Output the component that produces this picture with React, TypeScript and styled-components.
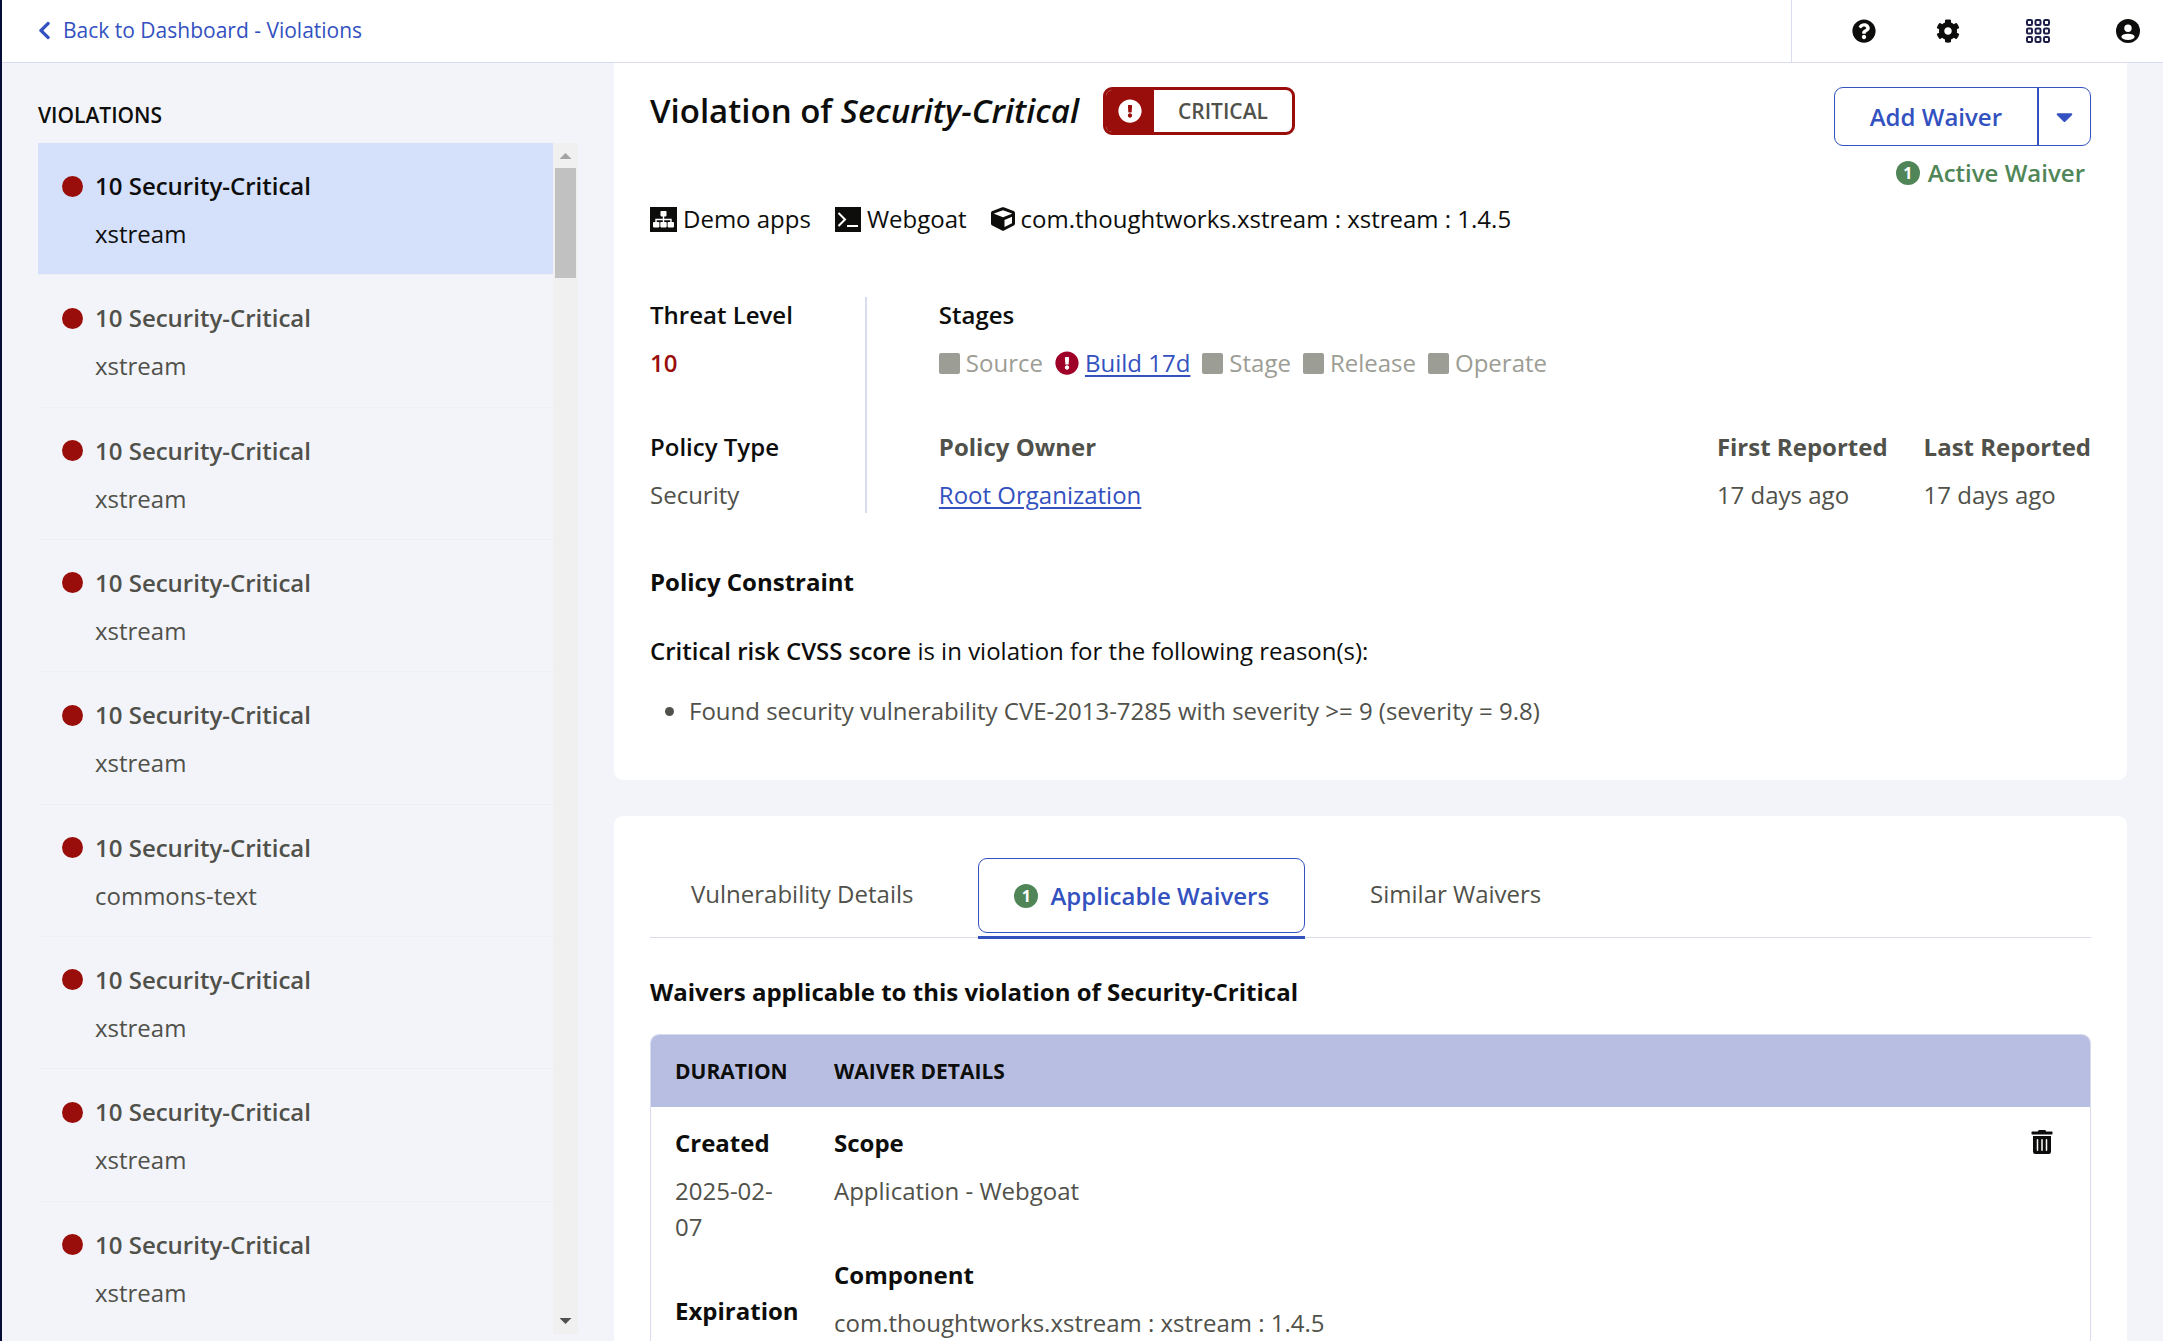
import React from 'react';
import styled, { createGlobalStyle } from 'styled-components';
import {
  FaCaretDown,
  FaChevronLeft,
  FaCog,
  FaCube,
  FaExclamationCircle,
  FaQuestionCircle,
  FaTrashAlt,
} from 'react-icons/fa';

const color = {
  ink: '#0d0e0c',
  text: '#50514a',
  muted: '#9c9d94',
  link: '#3351bf',
  red: '#990e0a',
  crimson: '#9f0028',
  green: '#508657',
  page: '#f3f4fa',
  border: '#d9dbee',
  selected: '#d5e0fb',
  tableHead: '#b8bee2',
};

const GlobalStyle = createGlobalStyle`
  *, *::before, *::after { box-sizing: border-box; }
  body {
    margin: 0;
    background: ${color.page};
    color: ${color.ink};
    font-family: "Open Sans", "Noto Sans", sans-serif;
    font-size: 24px;
    line-height: 36px;
  }
  h1, h2, h3, p, ul, dl, dd, dt { margin: 0; padding: 0; }
  button { font: inherit; color: inherit; background: none; border: 0; padding: 0; cursor: pointer; }
  svg { display: block; flex: none; }
`;

const Shell = styled.div`
  display: flex;
  flex-direction: column;
  height: 100vh;
  overflow: hidden;
  border-left: 2px solid #030d38;
`;

const Header = styled.header`
  display: flex;
  flex: none;
  justify-content: space-between;
  height: 63px;
  background: #fff;
  border-bottom: 1px solid ${color.border};
`;

const BackLink = styled.a`
  display: flex;
  align-items: center;
  gap: 12px;
  padding: 0 36px 2px;
  color: ${color.link};
  font-size: 21px;
  text-decoration: none;
`;

const BackIcon = styled(FaChevronLeft)`
  width: 13px;
  height: 21px;
`;

const Tools = styled.nav`
  display: flex;
  align-items: center;
  gap: 66px;
  padding: 0 23px 0 60px;
  border-left: 1px solid ${color.border};
`;

const ToolPair = styled.div`
  display: flex;
  gap: 60px;
`;

const IconButton = styled.button`
  display: grid;
  place-items: center;
  width: 24px;
  height: 24px;
`;

const Body = styled.div`
  display: flex;
  flex: 1;
  min-height: 0;
`;

const Sidebar = styled.aside`
  display: flex;
  flex: none;
  flex-direction: column;
  width: 612px;
  padding: 34px 36px 7px;
`;

const SidebarTitle = styled.h2`
  margin-bottom: 10px;
  font-size: 21px;
  font-weight: 600;
  text-transform: uppercase;
`;

const ListFrame = styled.div`
  display: flex;
  flex: 1;
  min-height: 0;
`;

const List = styled.ul`
  display: grid;
  flex: 1;
  grid-auto-rows: 1fr;
  list-style: none;
`;

const ListItem = styled.li`
  border-bottom: 1px solid #edeff5;

  &:last-child {
    border-bottom: 0;
  }
`;

const ViolationButton = styled.button<{ $selected: boolean }>`
  display: grid;
  grid-template-columns: 21px 1fr;
  align-content: start;
  align-items: center;
  gap: 12px;
  width: 100%;
  height: 100%;
  padding: 25px 24px 0;
  text-align: left;
  color: ${(p) => (p.$selected ? color.ink : color.text)};
  background: ${(p) => (p.$selected ? color.selected : 'transparent')};
`;

const Dot = styled.span`
  width: 21px;
  height: 21px;
  border-radius: 50%;
  background: ${color.red};
`;

const ViolationName = styled.span`
  font-weight: 600;
`;

const ViolationComponent = styled.span`
  grid-column: 2;
`;

const ScrollTrack = styled.div`
  display: flex;
  flex-direction: column;
  align-items: center;
  width: 25px;
  background: #f0f0f0;
`;

const ScrollArrow = styled.span<{ $down?: boolean }>`
  width: 12px;
  height: 6px;
  margin: ${(p) => (p.$down ? 'auto 0 10px' : '10px 0 9px')};
  background: ${(p) => (p.$down ? '#505050' : '#a3a3a3')};
  clip-path: ${(p) => (p.$down ? 'polygon(0 0, 100% 0, 50% 100%)' : 'polygon(0 100%, 100% 100%, 50% 0)')};
`;

const ScrollThumb = styled.span`
  width: 21px;
  height: 110px;
  background: #c1c1c1;
`;

const Main = styled.main`
  display: flex;
  flex: 1;
  flex-direction: column;
  gap: 36px;
  min-width: 0;
  padding-right: 36px;
  overflow: hidden;
`;

const Panel = styled.section<{ $first?: boolean }>`
  flex: none;
  padding: ${(p) => (p.$first ? '24px 36px 51px' : '42px 36px 36px')};
  background: #fff;
  border-radius: ${(p) => (p.$first ? '0 0 9px 9px' : '9px')};
`;

const TitleRow = styled.div`
  display: flex;
  align-items: flex-start;
  justify-content: space-between;
`;

const TitleGroup = styled.div`
  display: flex;
  align-items: center;
  gap: 24px;
`;

const Title = styled.h1`
  font-size: 33px;
  font-weight: 600;
  line-height: 48px;
`;

const SeverityBadge = styled.span`
  display: flex;
  height: 48px;
  overflow: hidden;
  border: 3px solid ${color.red};
  border-radius: 9px;
  color: ${color.text};
  font-size: 21px;
  font-weight: 600;
  line-height: 42px;
`;

const SeverityIcon = styled.span`
  display: grid;
  place-items: center;
  width: 48px;
  color: #fff;
  background: ${color.red};
`;

const SeverityText = styled.span`
  padding: 0 24px;
`;

const Actions = styled.div`
  display: flex;
  flex-direction: column;
  align-items: flex-end;
  gap: 9px;
`;

const SplitButton = styled.div`
  display: flex;
  height: 59px;
  border: 1px solid ${color.link};
  border-radius: 9px;
  color: ${color.link};
`;

const AddButton = styled.button`
  padding: 0 35px;
  font-weight: 600;
`;

const CaretButton = styled.button`
  display: grid;
  place-items: center;
  width: 53px;
  border-left: 2px solid ${color.link};
`;

const ActiveWaiver = styled.div`
  display: flex;
  align-items: center;
  gap: 8px;
  padding-right: 6px;
  color: ${color.green};
  font-weight: 600;
`;

const Count = styled.span`
  display: grid;
  place-items: center;
  width: 24px;
  height: 24px;
  border-radius: 50%;
  color: #fff;
  background: ${color.green};
  font-size: 16px;
  font-weight: 700;
  line-height: 24px;
`;

const Crumbs = styled.ul`
  display: flex;
  gap: 24px;
  margin-top: 10px;
  list-style: none;
`;

const Crumb = styled.li`
  display: flex;
  align-items: center;
  gap: 6px;
`;

const Facts = styled.div`
  display: flex;
  margin-top: 60px;
`;

const FactColumn = styled.dl<{ $divided?: boolean; $push?: boolean }>`
  display: flex;
  flex-direction: column;
  justify-content: flex-end;
  gap: 48px;
  min-height: 216px;
  margin-left: ${(p) => (p.$push ? 'auto' : '0')};
  padding: ${(p) => (p.$divided ? '0 72px 0 0' : '0')};
  border-right: ${(p) => (p.$divided ? `2px solid ${color.border}` : '0')};
`;

const StageColumn = styled(FactColumn)`
  margin-left: 72px;
`;

const DateColumn = styled(FactColumn)`
  & + & {
    margin-left: 36px;
  }
`;

const Fact = styled.div`
  display: flex;
  flex-direction: column;
  gap: 12px;
`;

const Term = styled.dt<{ $tone?: 'ink' | 'text'; $weight?: number }>`
  color: ${(p) => (p.$tone === 'text' ? color.text : color.ink)};
  font-weight: ${(p) => p.$weight ?? 600};
`;

const Value = styled.dd<{ $danger?: boolean }>`
  color: ${(p) => (p.$danger ? color.red : color.text)};
  font-weight: ${(p) => (p.$danger ? 600 : 400)};
`;

const Stages = styled.dd`
  display: flex;
  gap: 12px;
`;

const Stage = styled.span`
  display: flex;
  align-items: center;
  gap: 6px;
  color: ${color.muted};
`;

const StageBox = styled.span`
  width: 21px;
  height: 21px;
  border-radius: 2px;
  background: ${color.muted};
`;

const Link = styled.a`
  color: ${color.link};
  text-decoration: underline;
  text-decoration-thickness: 2px;
  text-underline-offset: 3px;
`;

const SectionTitle = styled.h2`
  margin-top: 51px;
  font-size: 24px;
  font-weight: 700;
`;

const Reason = styled.p`
  margin-top: 33px;
`;

const Strong = styled.strong`
  font-weight: 600;
`;

const Reasons = styled.ul`
  margin-top: 24px;
  padding-left: 39px;
  color: ${color.text};
`;

const TabBar = styled.div`
  display: flex;
  gap: 24px;
  border-bottom: 1px solid ${color.border};
`;

const Tab = styled.button<{ $active: boolean }>`
  height: 81px;
  margin-bottom: -2px;
  padding-bottom: 3px;
  border-bottom: 3px solid ${(p) => (p.$active ? color.link : 'transparent')};
`;

const TabFace = styled.span<{ $active: boolean }>`
  display: flex;
  align-items: center;
  gap: 12px;
  height: 75px;
  padding: ${(p) => (p.$active ? '0 35px' : '0 41px 3px')};
  border: ${(p) => (p.$active ? `1px solid ${color.link}` : '0')};
  border-radius: 9px;
  color: ${(p) => (p.$active ? color.link : color.text)};
  font-weight: ${(p) => (p.$active ? 600 : 400)};
`;

const WaiverTitle = styled(SectionTitle)`
  margin-top: 36px;
  margin-bottom: 24px;
`;

const TableFrame = styled.div`
  overflow: hidden;
  border: 1px solid ${color.border};
  border-radius: 9px;
`;

const Table = styled.table`
  width: 100%;
  border-collapse: collapse;
  table-layout: fixed;
`;

const HeadCell = styled.th<{ $width?: string }>`
  width: ${(p) => p.$width ?? 'auto'};
  height: 72px;
  padding: 0 24px;
  background: ${color.tableHead};
  font-size: 21px;
  font-weight: 700;
  text-align: left;
  text-transform: uppercase;
`;

const Cell = styled.td<{ $tight?: boolean }>`
  padding: ${(p) => (p.$tight ? '18px 12px 36px 24px' : '18px 24px 36px')};
  vertical-align: top;
`;

const DetailRow = styled.div`
  display: flex;
  align-items: flex-start;
  justify-content: space-between;
`;

const DetailList = styled.dl`
  display: flex;
  flex-direction: column;
  gap: 48px;
`;

const RemoveButton = styled(IconButton)`
  margin: 5px 12px 0 0;
`;

function AppsIcon() {
  return (
    <svg width="24" height="24" viewBox="0 0 24 24" fill="none" stroke="#1d1f4b" strokeWidth="2" aria-hidden="true">
      {[1, 9.5, 18].map((y) =>
        [1, 9.5, 18].map((x) => <rect key={`${x}-${y}`} x={x} y={y} width="5" height="5" rx="1.2" />),
      )}
    </svg>
  );
}

function UserIcon() {
  return (
    <svg width="24" height="24" viewBox="0 0 24 24" aria-hidden="true">
      <circle cx="12" cy="12" r="12" fill={color.ink} />
      <circle cx="12" cy="9.2" r="3.7" fill="#fff" />
      <ellipse cx="12" cy="17.8" rx="6.6" ry="3.1" fill="#fff" />
    </svg>
  );
}

function OrganizationIcon() {
  return (
    <svg width="27" height="25" viewBox="0 0 27 25" aria-hidden="true">
      <rect width="27" height="25" fill={color.ink} />
      <g fill="#fff">
        <rect x="10.5" y="4" width="6" height="5.4" rx="0.8" />
        <rect x="3" y="15" width="6.4" height="5.4" rx="0.8" />
        <rect x="10.3" y="15" width="6.4" height="5.4" rx="0.8" />
        <rect x="17.6" y="15" width="6.4" height="5.4" rx="0.8" />
      </g>
      <path d="M13.5 8.5V16M6 16v-3.5h15V16" fill="none" stroke="#fff" strokeWidth="1.4" />
    </svg>
  );
}

function TerminalIcon() {
  return (
    <svg width="26" height="25" viewBox="0 0 26 25" aria-hidden="true">
      <rect width="26" height="25" fill={color.ink} />
      <path d="M3.5 6l6.5 6.5L3.5 19M12 19h11" fill="none" stroke="#fff" strokeWidth="2" />
    </svg>
  );
}

const violations = [
  'xstream', 'xstream', 'xstream', 'xstream', 'xstream', 'commons-text', 'xstream', 'xstream', 'xstream',
];

const tabs = [
  { label: 'Vulnerability Details' },
  { label: 'Applicable Waivers', count: 1 },
  { label: 'Similar Waivers' },
];

export default function App() {
  const [selected, setSelected] = React.useState(0);
  const [activeTab, setActiveTab] = React.useState(1);

  return (
    <>
      <GlobalStyle />
      <Shell>
        <Header>
          <BackLink href="#dashboard">
            <BackIcon />
            Back to Dashboard - Violations
          </BackLink>
          <Tools>
            <ToolPair>
              <IconButton type="button" aria-label="Help"><FaQuestionCircle size={24} /></IconButton>
              <IconButton type="button" aria-label="Settings"><FaCog size={24} /></IconButton>
            </ToolPair>
            <IconButton type="button" aria-label="Apps"><AppsIcon /></IconButton>
            <IconButton type="button" aria-label="Account"><UserIcon /></IconButton>
          </Tools>
        </Header>

        <Body>
          <Sidebar>
            <SidebarTitle>Violations</SidebarTitle>
            <ListFrame>
              <List>
                {violations.map((component, i) => (
                  <ListItem key={i}>
                    <ViolationButton type="button" $selected={i === selected} onClick={() => setSelected(i)}>
                      <Dot />
                      <ViolationName>10 Security-Critical</ViolationName>
                      <ViolationComponent>{component}</ViolationComponent>
                    </ViolationButton>
                  </ListItem>
                ))}
              </List>
              <ScrollTrack aria-hidden="true">
                <ScrollArrow />
                <ScrollThumb />
                <ScrollArrow $down />
              </ScrollTrack>
            </ListFrame>
          </Sidebar>

          <Main>
            <Panel $first>
              <TitleRow>
                <TitleGroup>
                  <Title>Violation of <em>Security-Critical</em></Title>
                  <SeverityBadge>
                    <SeverityIcon><FaExclamationCircle size={24} /></SeverityIcon>
                    <SeverityText>CRITICAL</SeverityText>
                  </SeverityBadge>
                </TitleGroup>
                <Actions>
                  <SplitButton>
                    <AddButton type="button">Add Waiver</AddButton>
                    <CaretButton type="button" aria-label="More waiver actions"><FaCaretDown size={27} /></CaretButton>
                  </SplitButton>
                  <ActiveWaiver><Count>1</Count>Active Waiver</ActiveWaiver>
                </Actions>
              </TitleRow>

              <Crumbs>
                <Crumb><OrganizationIcon />Demo apps</Crumb>
                <Crumb><TerminalIcon />Webgoat</Crumb>
                <Crumb><FaCube size={24} />com.thoughtworks.xstream : xstream : 1.4.5</Crumb>
              </Crumbs>

              <Facts>
                <FactColumn $divided>
                  <Fact><Term>Threat Level</Term><Value $danger>10</Value></Fact>
                  <Fact><Term>Policy Type</Term><Value>Security</Value></Fact>
                </FactColumn>
                <StageColumn>
                  <Fact>
                    <Term>Stages</Term>
                    <Stages>
                      <Stage><StageBox />Source</Stage>
                      <Stage>
                        <FaExclamationCircle size={24} color={color.crimson} />
                        <Link href="#build">Build 17d</Link>
                      </Stage>
                      <Stage><StageBox />Stage</Stage>
                      <Stage><StageBox />Release</Stage>
                      <Stage><StageBox />Operate</Stage>
                    </Stages>
                  </Fact>
                  <Fact>
                    <Term $tone="text" $weight={700}>Policy Owner</Term>
                    <Value><Link href="#root-organization">Root Organization</Link></Value>
                  </Fact>
                </StageColumn>
                <DateColumn $push>
                  <Fact><Term $tone="text" $weight={700}>First Reported</Term><Value>17 days ago</Value></Fact>
                </DateColumn>
                <DateColumn>
                  <Fact><Term $tone="text" $weight={700}>Last Reported</Term><Value>17 days ago</Value></Fact>
                </DateColumn>
              </Facts>

              <SectionTitle>Policy Constraint</SectionTitle>
              <Reason><Strong>Critical risk CVSS score</Strong> is in violation for the following reason(s):</Reason>
              <Reasons>
                <li>Found security vulnerability CVE-2013-7285 with severity &gt;= 9 (severity = 9.8)</li>
              </Reasons>
            </Panel>

            <Panel>
              <TabBar role="tablist">
                {tabs.map((tab, i) => (
                  <Tab
                    key={tab.label}
                    type="button"
                    role="tab"
                    aria-selected={i === activeTab}
                    $active={i === activeTab}
                    onClick={() => setActiveTab(i)}
                  >
                    <TabFace $active={i === activeTab}>
                      {tab.count && <Count>{tab.count}</Count>}
                      {tab.label}
                    </TabFace>
                  </Tab>
                ))}
              </TabBar>

              <WaiverTitle>Waivers applicable to this violation of Security-Critical</WaiverTitle>
              <TableFrame>
                <Table>
                  <thead>
                    <tr>
                      <HeadCell scope="col" $width="159px">Duration</HeadCell>
                      <HeadCell scope="col">Waiver Details</HeadCell>
                    </tr>
                  </thead>
                  <tbody>
                    <tr>
                      <Cell $tight>
                        <DetailList>
                          <Fact><Term $weight={700}>Created</Term><Value>2025-02-07</Value></Fact>
                          <Fact><Term $weight={700}>Expiration</Term></Fact>
                        </DetailList>
                      </Cell>
                      <Cell>
                        <DetailRow>
                          <DetailList>
                            <Fact><Term $weight={700}>Scope</Term><Value>Application - Webgoat</Value></Fact>
                            <Fact>
                              <Term $weight={700}>Component</Term>
                              <Value>com.thoughtworks.xstream : xstream : 1.4.5</Value>
                            </Fact>
                          </DetailList>
                          <RemoveButton type="button" aria-label="Delete waiver"><FaTrashAlt size={24} /></RemoveButton>
                        </DetailRow>
                      </Cell>
                    </tr>
                  </tbody>
                </Table>
              </TableFrame>
            </Panel>
          </Main>
        </Body>
      </Shell>
    </>
  );
}
